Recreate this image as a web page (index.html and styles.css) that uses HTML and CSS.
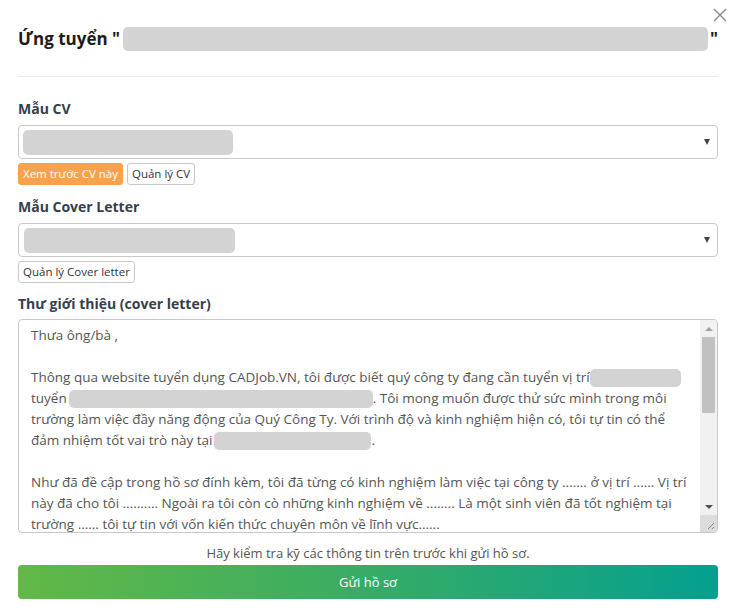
FILE: index.html
```html
<!DOCTYPE html>
<html lang="vi">
<head>
<meta charset="utf-8">
<title>Ứng tuyển</title>
<link rel="stylesheet" href="styles.css">
</head>
<body>
<div class="modal">
  <button class="close" aria-label="Đóng">
    <svg width="14" height="14" viewBox="0 0 14 14"><path d="M1 1L13 13M13 1L1 13" stroke="#8a8a8a" stroke-width="1.4" fill="none"/></svg>
  </button>
  <h2 class="title">Ứng tuyển "<span class="ph ph-title"></span>"</h2>
  <hr class="divider">

  <div class="label">Mẫu CV</div>
  <div class="select">
    <span class="ph ph-cv"></span>
    <span class="arrow"></span>
  </div>
  <div class="btn-row">
    <button class="btn btn-orange">Xem trước CV này</button>
    <button class="btn btn-light">Quản lý CV</button>
  </div>

  <div class="label">Mẫu Cover Letter</div>
  <div class="select">
    <span class="ph ph-cl"></span>
    <span class="arrow"></span>
  </div>
  <div class="btn-row">
    <button class="btn btn-light">Quản lý Cover letter</button>
  </div>

  <div class="label label-letter">Thư giới thiệu (cover letter)</div>
  <div class="textarea">
    <div class="ta-text">
      <div class="line">Thưa ông/bà ,</div>
      <div class="line"></div>
      <div class="line">Thông qua website tuyển dụng CADJob.VN, tôi được biết quý công ty đang cần tuyển vị trí<span class="ph ph-in ph-w1"></span></div>
      <div class="line">tuyển<span class="ph ph-in ph-w2"></span>. Tôi mong muốn được thử sức mình trong môi</div>
      <div class="line">trường làm việc đầy năng động của Quý Công Ty. Với trình độ và kinh nghiệm hiện có, tôi tự tin có thể</div>
      <div class="line">đảm nhiệm tốt vai trò này tại<span class="ph ph-in ph-w3"></span>.</div>
      <div class="line"></div>
      <div class="line">Như đã đề cập trong hồ sơ đính kèm, tôi đã từng có kinh nghiệm làm việc tại công ty ....... ở vị trí ...... Vị trí</div>
      <div class="line">này đã cho tôi .......... Ngoài ra tôi còn cò những kinh nghiệm về ........ Là một sinh viên đã tốt nghiệm tại</div>
      <div class="line">trường ...... tôi tự tin với vốn kiến thức chuyên môn về lĩnh vực......</div>
    </div>
    <div class="scrollbar">
      <div class="sb-btn"><span class="tri-up"></span></div>
      <div class="sb-track"><div class="sb-thumb"></div></div>
      <div class="sb-btn"><span class="tri-down"></span></div>
      <div class="sb-corner">
        <svg width="17" height="17" viewBox="0 0 17 17"><path d="M14 8L8 14M14 12L12 14" stroke="#888" stroke-width="1" fill="none"/></svg>
      </div>
    </div>
  </div>

  <p class="hint">Hãy kiểm tra kỹ các thông tin trên trước khi gửi hồ sơ.</p>
  <button class="submit">Gửi hồ sơ</button>
</div>
</body>
</html>
```

FILE: styles.css
```css
* { box-sizing: border-box; }
html, body { margin: 0; padding: 0; background: #fff; }
body {
  font-family: "Open Sans", "Noto Sans", sans-serif;
  color: #555;
}
.modal {
  position: relative;
  padding: 27px 21px 0 18px;
}
.close {
  position: absolute;
  top: 8px;
  right: 12px;
  width: 14px;
  height: 14px;
  padding: 0;
  border: 0;
  background: none;
  display: block;
}
.close svg { display: block; }
.title {
  margin: 0;
  font-size: 17px;
  line-height: 24px;
  font-weight: 700;
  color: #1c1c1c;
  display: flex;
  align-items: center;
  white-space: nowrap;
}
.ph {
  display: inline-block;
  background: #d3d3d3;
  border-radius: 5px;
}
.ph-title {
  flex: 1;
  height: 24px;
  margin: 0 2px 0 3px;
}
.divider {
  border: 0;
  border-top: 1px solid #eaeaea;
  margin: 25px 0 0;
  height: 0;
}
.label {
  margin-top: 22px;
  font-size: 14px;
  line-height: 20px;
  font-weight: 700;
  color: #35404e;
}
.btn-row + .label { margin-top: 12px; }
.btn-row + .label-letter { margin-top: 11px; }
.select {
  margin-top: 6px;
  height: 34px;
  border: 1px solid #c8c8c8;
  border-radius: 4px;
  padding: 4px 4px;
  display: flex;
  align-items: center;
  justify-content: space-between;
}
.ph-cv { width: 210px; height: 25px; }
.ph-cl { width: 211px; height: 25px; margin-left: 1px; }
.arrow {
  width: 0;
  height: 0;
  border-left: 3.5px solid transparent;
  border-right: 3.5px solid transparent;
  border-top: 6px solid #444;
  margin-right: 3px;
}
.btn-row {
  margin-top: 4px;
  display: flex;
  gap: 4px;
}
.btn {
  font-family: inherit;
  font-size: 11.5px;
  height: 22px;
  line-height: 20px;
  padding: 0 4px;
  border-radius: 3px;
  white-space: nowrap;
}
.btn-orange {
  background: #f9a24d;
  border: 1px solid #f9a24d;
  color: #fff;
}
.btn-light {
  background: #fff;
  border: 1px solid #c8c8c8;
  color: #333;
}
.textarea {
  margin-top: 5px;
  height: 214px;
  border: 1px solid #c8c8c8;
  border-radius: 4px;
  display: flex;
  overflow: hidden;
}
.ta-text {
  flex: 1;
  padding: 5px 12px;
  font-size: 13.5px;
  line-height: 21px;
  color: #555;
  overflow: hidden;
  white-space: nowrap;
}
.line { height: 21px; display: flex; align-items: center; }
.ph-in { height: 18px; border-radius: 5px; }
.ph-w1 { width: 91px; }
.ph-w2 { width: 304px; margin-left: 2px; }
.ph-w3 { width: 157px; margin-left: 2px; }
.scrollbar {
  width: 17px;
  background: #f1f1f1;
  display: flex;
  flex-direction: column;
}
.sb-btn {
  height: 17px;
  display: flex;
  align-items: center;
  justify-content: center;
}
.tri-up, .tri-down {
  width: 0;
  height: 0;
  border-left: 4px solid transparent;
  border-right: 4px solid transparent;
}
.tri-up { border-bottom: 4px solid #a3a3a3; }
.tri-down { border-top: 4px solid #505050; }
.sb-track { flex: 1; padding: 0 2px; }
.sb-thumb { height: 76px; background: #c1c1c1; }
.sb-corner { height: 17px; background: #dcdcdc; }
.sb-corner svg { display: block; }
.hint {
  margin: 10px 0 2px;
  text-align: center;
  font-size: 13px;
  line-height: 20px;
  color: #555;
}
.submit {
  display: block;
  width: 100%;
  height: 34px;
  border: 0;
  border-radius: 4px;
  background: linear-gradient(90deg, #63b847 0%, #3cad62 45%, #04a08f 100%);
  color: #fff;
  font-family: inherit;
  font-size: 13px;
}
```
